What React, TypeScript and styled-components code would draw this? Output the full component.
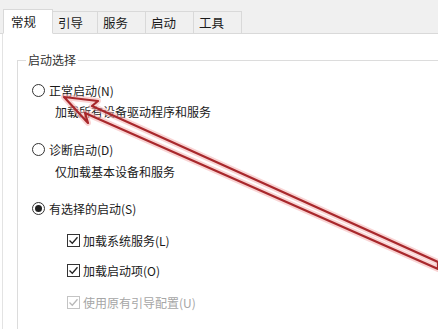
import styled, { createGlobalStyle } from 'styled-components';

const Global = createGlobalStyle`
  html, body {
    margin: 0;
    padding: 0;
    background: #ffffff;
  }
  body {
    font-family: "Noto Sans CJK SC", "Noto Sans", sans-serif;
    font-size: 12px;
    color: #1a1a1a;
  }
`;

const Window = styled.div`
  position: relative;
  width: 438px;
  height: 329px;
  overflow: hidden;
  background: #ffffff;
`;

const TabBar = styled.div`
  height: 34px;
  box-sizing: border-box;
  display: flex;
  align-items: flex-end;
  padding-left: 3px;
  background: #f0f0f0;
  border-bottom: 1px solid #d9d9d9;
`;

const Tab = styled.div<{ active?: boolean; w: number }>`
  box-sizing: border-box;
  width: ${p => p.w}px;
  height: ${p => (p.active ? 25 : 22)}px;
  margin-bottom: ${p => (p.active ? -1 : 0)}px;
  padding-left: ${p => (p.active ? 7 : 5)}px;
  padding-bottom: ${p => (p.active ? 1 : 0)}px;
  display: flex;
  align-items: center;
  background: ${p => (p.active ? '#ffffff' : '#f0f0f0')};
  border: 1px solid #d9d9d9;
  border-left: ${p => (p.active ? '1px solid #d9d9d9' : 'none')};
  border-bottom: ${p => (p.active ? '1px solid #ffffff' : 'none')};
  font-size: 12.5px;
  color: #1a1a1a;
`;

const Panel = styled.div`
  height: 295px;
  box-sizing: border-box;
  margin-left: 2px;
  border-left: 1px solid #e3e3e3;
  padding: 26px 0 0 14px;
  background: #ffffff;
`;

const GroupBox = styled.fieldset`
  margin: 0;
  padding: 0 0 40px 14px;
  border: 1px solid #dcdcdc;
  border-right: none;
  width: 440px;
  box-sizing: border-box;
  position: relative;
`;

const Legend = styled.div`
  position: absolute;
  top: -9px;
  left: 8px;
  padding: 0 2px;
  background: #ffffff;
  font-size: 12px;
  line-height: 16px;
  color: #333333;
`;

const Row = styled.div<{ top: number; indent: number; disabled?: boolean }>`
  height: 20px;
  margin-top: ${p => p.top}px;
  margin-left: ${p => p.indent}px;
  display: flex;
  align-items: center;
  gap: 3px;
  font-size: 12px;
  color: ${p => (p.disabled ? '#a6a6a6' : '#1a1a1a')};
  white-space: nowrap;
`;

const RadioCircle = styled.span<{ checked?: boolean }>`
  box-sizing: border-box;
  width: 13px;
  height: 13px;
  border: 1px solid #333333;
  border-radius: 50%;
  background: #ffffff;
  display: flex;
  align-items: center;
  justify-content: center;
  margin-right: 1px;
  &::after {
    content: '';
    display: ${p => (p.checked ? 'block' : 'none')};
    width: 7px;
    height: 7px;
    border-radius: 50%;
    background: #222222;
  }
`;

const CheckBox = styled.span<{ disabled?: boolean }>`
  box-sizing: border-box;
  width: 13px;
  height: 13px;
  border: 1px solid ${p => (p.disabled ? '#c4c4c4' : '#333333')};
  background: #ffffff;
  display: flex;
  align-items: center;
  justify-content: center;
  svg {
    display: block;
  }
`;

const Overlay = styled.svg`
  position: absolute;
  left: 0;
  top: 0;
  pointer-events: none;
`;

function Check({ disabled }: { disabled?: boolean }) {
  return (
    <CheckBox disabled={disabled}>
      <svg width="11" height="11" viewBox="0 0 11 11">
        <path d="M1.5 5.5 L4.3 8.3 L9.5 2.3" fill="none" stroke={disabled ? '#b8b8b8' : '#222'} strokeWidth="1.3" />
      </svg>
    </CheckBox>
  );
}

// hollow red arrow drawn over the dialog, tip near 正常启动
const arrow = 'M64 97 L98 101 L92 106 L438 262 L438 269 L85 113 L88 123 Z';

export default function App() {
  return (
    <Window>
      <Global />
      <TabBar>
        <Tab active w={50}>常规</Tab>
        <Tab w={45}>引导</Tab>
        <Tab w={48}>服务</Tab>
        <Tab w={48}>启动</Tab>
        <Tab w={48}>工具</Tab>
      </TabBar>
      <Panel>
        <GroupBox>
          <Legend>启动选择</Legend>
          <Row top={19} indent={0}><RadioCircle />正常启动(N)</Row>
          <Row top={1} indent={23}>加载所有设备驱动程序和服务</Row>
          <Row top={18} indent={0}><RadioCircle />诊断启动(D)</Row>
          <Row top={2} indent={23}>仅加载基本设备和服务</Row>
          <Row top={17} indent={0}><RadioCircle checked />有选择的启动(S)</Row>
          <Row top={12} indent={35}><Check />加载系统服务(L)</Row>
          <Row top={10} indent={35}><Check />加载启动项(O)</Row>
          <Row top={12} indent={35} disabled><Check disabled />使用原有引导配置(U)</Row>
        </GroupBox>
      </Panel>
      <Overlay width="438" height="329" viewBox="0 0 438 329">
        <path d={arrow} fill="none" stroke="#f4b0b0" strokeOpacity="0.55" strokeWidth="6" strokeLinejoin="round" />
        <path d={arrow} fill="none" stroke="#a8282c" strokeWidth="2.2" strokeLinejoin="round" />
      </Overlay>
    </Window>
  );
}
